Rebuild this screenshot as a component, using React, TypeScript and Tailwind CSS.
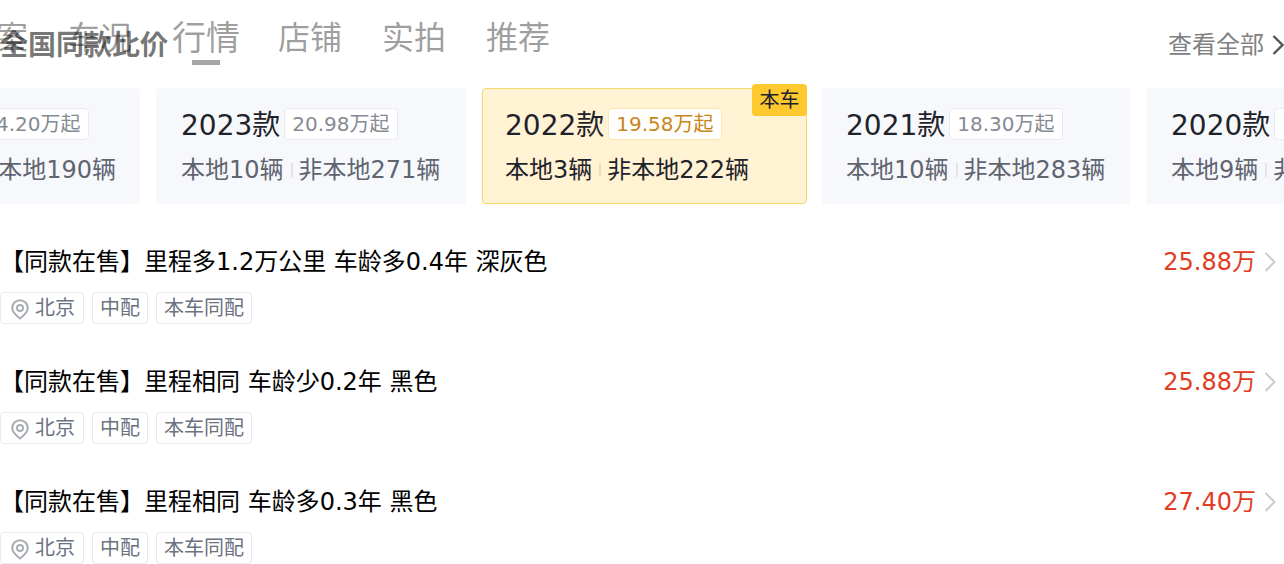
const font = "font-['DejaVu_Sans','Noto_Sans_CJK_JP',sans-serif]"

const years = [
  { year: "2024款", price: "24.20万起", local: "本地3辆", other: "非本地190辆", box: "w-[293px] pl-6" },
  { year: "2023款", price: "20.98万起", local: "本地10辆", other: "非本地271辆", box: "w-[310px] pl-6" },
  { year: "2022款", price: "19.58万起", local: "本地3辆", other: "非本地222辆", box: "w-[325px] pl-[22px] -mr-px", current: true },
  { year: "2021款", price: "18.30万起", local: "本地10辆", other: "非本地283辆", box: "w-[308px] pl-[23px]" },
  { year: "2020款", price: "17.98万起", local: "本地9辆", other: "非本地196辆", box: "w-[310px] pl-6" },
]

const listings = [
  { title: "【同款在售】里程多1.2万公里 车龄多0.4年 深灰色", price: "25.88万" },
  { title: "【同款在售】里程相同 车龄少0.2年 黑色", price: "25.88万" },
  { title: "【同款在售】里程相同 车龄多0.3年 黑色", price: "27.40万" },
]

function Chevron({ className, weight = 2 }: { className: string; weight?: number }) {
  return (
    <svg viewBox="0 0 12 20" fill="none" stroke="currentColor" strokeWidth={weight} className={className}>
      <path d="M1.500 1l9 9-9 9" />
    </svg>
  )
}

function Pin() {
  return (
    <svg viewBox="0 0 18 21" fill="none" stroke="#a9adb5" strokeWidth="2" className="w-[18px] h-[21px] mt-[3px] shrink-0">
      <path d="M9 19.500C5 16.500 1.200 13.500 1.200 9a7.800 7.800 0 0 1 15.600 0c0 4.500-3.800 7.500-7.800 10.500z" />
      <circle cx="9" cy="9" r="3" />
    </svg>
  )
}

function Tag({ children }: { children: React.ReactNode }) {
  return (
    <div className="h-8 flex items-center px-[7px] border border-[#e8e9ec] rounded text-[20px] text-[#6b7280]">
      {children}
    </div>
  )
}

export default function App() {
  return (
    <div className={`w-[1284px] h-[564px] overflow-hidden bg-white relative ${font}`}>
      <div className="h-[88px] relative">
        <div className="flex gap-10 items-start text-[32px] leading-[44px] text-black/40 pt-4 -ml-[36px]">
          <span>方案</span>
          <span>车况</span>
          <div className="relative text-[34px] -mr-[2px]">
            行情
            <div className="absolute left-[20px] top-[44px] w-7 h-[5px] bg-black/35" />
          </div>
          <span>店铺</span>
          <span>实拍</span>
          <span>推荐</span>
        </div>
        <div className="absolute left-0 top-[29px] text-[28px] leading-[34px] font-bold text-black/55 whitespace-nowrap">
          全国同款比价
        </div>
        <div className="absolute right-0 top-[28px] flex items-center gap-2 text-[24px] leading-[34px] text-[#808080]">
          查看全部
          <Chevron className="w-3 h-5 text-[#555555]" weight={2.400} />
        </div>
      </div>

      <div className="flex gap-4 -ml-[153px] w-[1600px]">
        {years.map((y) => (
          <div
            key={y.year}
            className={`${y.box} ${y.current ? "bg-[#fff3d4] border border-[#f8d56b]" : "bg-[#f6f8fc] border border-transparent"} shrink-0 h-[116px] rounded relative pt-[19px]`}
          >
            {y.current && (
              <div className="absolute -right-px -top-[5px] h-8 w-[55px] bg-[#fdc92f] rounded text-[20px] leading-8 text-center text-[#1f2329]">
                本车
              </div>
            )}
            <div className="flex items-center gap-1 h-8">
              <span className="text-[28px] mt-1 text-[#1f2329]">{y.year}</span>
              <span
                className={`h-8 px-[7px] flex items-center bg-white border rounded text-[20px] ${y.current ? "border-[#fbe7b0] text-[#c8861a]" : "border-[#e8e9ec] text-[#858a93]"}`}
              >
                {y.price}
              </span>
            </div>
            <div className={`flex items-center mt-[14px] text-[24px] leading-8 ${y.current ? "text-[#1f2329]" : "text-[#5f6570]"}`}>
              <span>{y.local}</span>
              <span className={`w-0.5 h-[14px] ml-[7px] mr-[6px] ${y.current ? "bg-[#eadfc0]" : "bg-[#e2e4e8]"}`} />
              <span>{y.other}</span>
            </div>
          </div>
        ))}
      </div>

      <div className="flex flex-col gap-[32px] pt-[40px]">
        {listings.map((l) => (
          <div key={l.title + l.price} className="h-[88px] flex flex-col gap-3">
            <div className="flex items-center justify-between h-9">
              <span className="text-[24px] text-black whitespace-nowrap">{l.title}</span>
              <div className="flex items-center gap-2 pr-2">
                <span className="text-[24px] text-[#e23c25]">{l.price}</span>
                <Chevron className="w-3 h-5 text-[#c9ccd3]" />
              </div>
            </div>
            <div className="flex gap-2">
              <Tag>
                <span className="ml-[3px]">
                  <Pin />
                </span>
                <span className="ml-[6px] mr-px">北京</span>
              </Tag>
              <Tag>中配</Tag>
              <Tag>本车同配</Tag>
            </div>
          </div>
        ))}
      </div>
    </div>
  )
}
